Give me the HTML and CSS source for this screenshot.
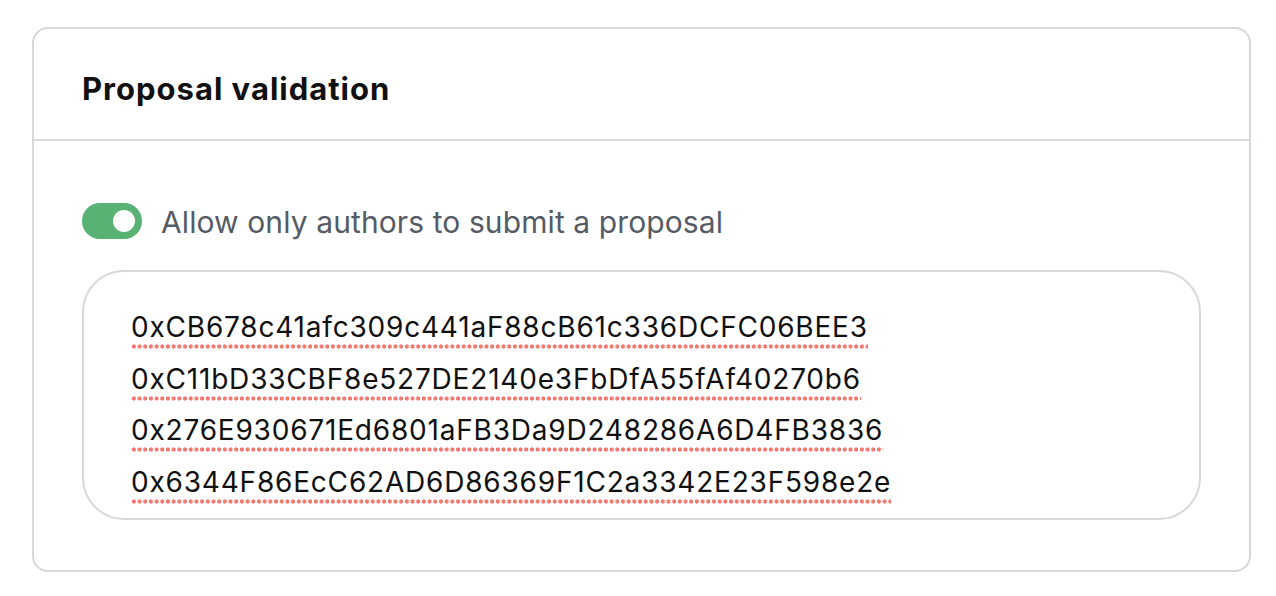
FILE: index.html
```html
<!DOCTYPE html>
<html>
<head>
<meta charset="utf-8">
<link rel="stylesheet" href="styles.css">
</head>
<body>
<div class="card">
  <div class="card-header">
    <h2 class="title">Proposal validation</h2>
  </div>
  <div class="card-body">
    <div class="toggle-row">
      <span class="toggle"><span class="knob"></span></span>
      <span class="toggle-label">Allow only authors to submit a proposal</span>
    </div>
    <div class="addresses">
      <div class="line"><span class="misspelled">0xCB678c41afc309c441aF88cB61c336DCFC06BEE3</span></div>
      <div class="line"><span class="misspelled">0xC11bD33CBF8e527DE2140e3FbDfA55fAf40270b6</span></div>
      <div class="line"><span class="misspelled">0x276E930671Ed6801aFB3Da9D248286A6D4FB3836</span></div>
      <div class="line"><span class="misspelled">0x6344F86EcC62AD6D86369F1C2a3342E23F598e2e</span></div>
    </div>
  </div>
</div>
</body>
</html>
```

FILE: styles.css
```css
html, body {
  margin: 0;
  padding: 0;
  background: #ffffff;
}

body {
  font-family: Inter, "Liberation Sans", sans-serif;
  padding: 27px 0 0 32px;
}

.card {
  width: 1219px;
  height: 545px;
  box-sizing: border-box;
  border: 2px solid #d5d8dd;
  border-radius: 16px;
  display: flex;
  flex-direction: column;
}

.card-header {
  height: 112px;
  box-sizing: border-box;
  border-bottom: 2px solid #d5d8dd;
  display: flex;
  align-items: center;
  padding: 8px 0 0 48px;
}

.title {
  margin: 0;
  font-size: 31px;
  font-weight: 700;
  color: #111111;
  letter-spacing: 1px;
}

.card-body {
  padding: 62px 48px 48px 48px;
  display: flex;
  flex-direction: column;
  gap: 31px;
}

.toggle-row {
  display: flex;
  align-items: center;
  gap: 19px;
  height: 36px;
}

.toggle {
  width: 60px;
  height: 36px;
  border-radius: 18px;
  background: #58b274;
  position: relative;
  flex: none;
}

.knob {
  position: absolute;
  right: 7px;
  top: 7px;
  width: 22px;
  height: 22px;
  border-radius: 50%;
  background: #ffffff;
}

.toggle-label {
  font-size: 30px;
  letter-spacing: 0.1px;
  color: #555b65;
  padding-top: 2px;
}

.addresses {
  height: 250px;
  box-sizing: border-box;
  border: 2px solid #d5d8dd;
  border-radius: 42px;
  padding: 30px 40px 0 47px;
}

.line {
  height: 51.7px;
  line-height: 51.7px;
  font-size: 28px;
  letter-spacing: 0.8px;
  color: #111111;
}

.misspelled {
  padding-bottom: 5px;
  background-image: radial-gradient(circle, #f27a72 1.9px, transparent 2.3px);
  background-size: 5.7px 5px;
  background-repeat: repeat-x;
  background-position: 0 100%;
}
```
